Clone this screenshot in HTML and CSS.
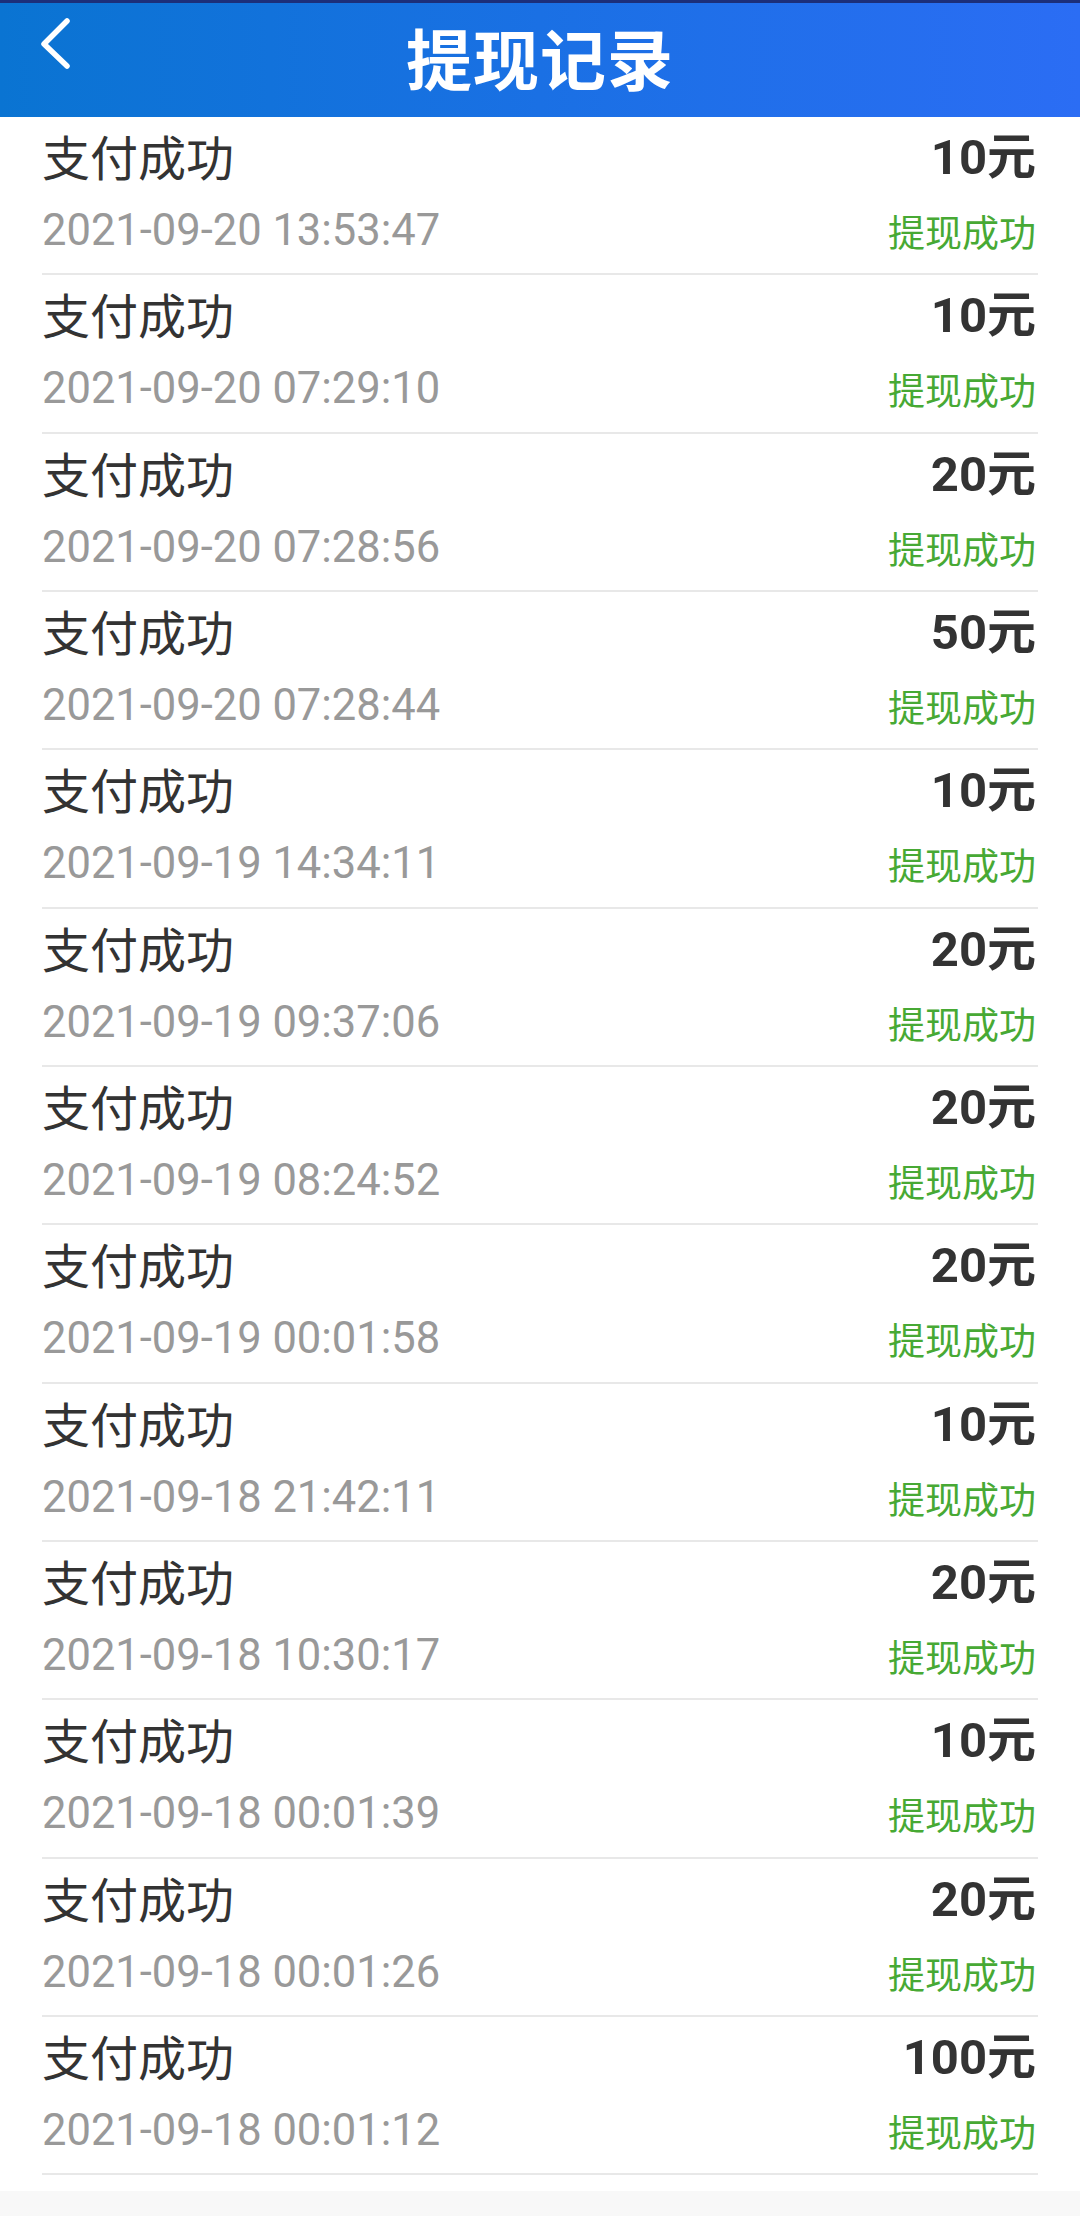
FILE: index.html
```html
<!DOCTYPE html>
<html lang="zh-CN">
<head>
<meta charset="utf-8">
<title>提现记录</title>
<link rel="stylesheet" href="styles.css">
</head>
<body>
<header class="topbar">
  <a class="back" href="#" aria-label="返回">
    <svg width="40" height="56" viewBox="0 0 40 56"><polyline points="27,6 4,29 27,51" fill="none" stroke="#fff" stroke-width="5.5" stroke-linecap="round" stroke-linejoin="round"/></svg>
  </a>
  <h1 class="title">提现记录</h1>
</header>
<main class="list">
  <div class="row"><span class="name">支付成功</span><span class="amount">10元</span><span class="date">2021-09-20 13:53:47</span><span class="status">提现成功</span></div>
  <div class="row"><span class="name">支付成功</span><span class="amount">10元</span><span class="date">2021-09-20 07:29:10</span><span class="status">提现成功</span></div>
  <div class="row"><span class="name">支付成功</span><span class="amount">20元</span><span class="date">2021-09-20 07:28:56</span><span class="status">提现成功</span></div>
  <div class="row"><span class="name">支付成功</span><span class="amount">50元</span><span class="date">2021-09-20 07:28:44</span><span class="status">提现成功</span></div>
  <div class="row"><span class="name">支付成功</span><span class="amount">10元</span><span class="date">2021-09-19 14:34:11</span><span class="status">提现成功</span></div>
  <div class="row"><span class="name">支付成功</span><span class="amount">20元</span><span class="date">2021-09-19 09:37:06</span><span class="status">提现成功</span></div>
  <div class="row"><span class="name">支付成功</span><span class="amount">20元</span><span class="date">2021-09-19 08:24:52</span><span class="status">提现成功</span></div>
  <div class="row"><span class="name">支付成功</span><span class="amount">20元</span><span class="date">2021-09-19 00:01:58</span><span class="status">提现成功</span></div>
  <div class="row"><span class="name">支付成功</span><span class="amount">10元</span><span class="date">2021-09-18 21:42:11</span><span class="status">提现成功</span></div>
  <div class="row"><span class="name">支付成功</span><span class="amount">20元</span><span class="date">2021-09-18 10:30:17</span><span class="status">提现成功</span></div>
  <div class="row"><span class="name">支付成功</span><span class="amount">10元</span><span class="date">2021-09-18 00:01:39</span><span class="status">提现成功</span></div>
  <div class="row"><span class="name">支付成功</span><span class="amount">20元</span><span class="date">2021-09-18 00:01:26</span><span class="status">提现成功</span></div>
  <div class="row"><span class="name">支付成功</span><span class="amount">100元</span><span class="date">2021-09-18 00:01:12</span><span class="status">提现成功</span></div>
</main>
<footer class="foot"></footer>
</body>
</html>
```
FILE: styles.css
```css
* { box-sizing: border-box; }
html, body { margin: 0; padding: 0; }
body {
  width: 1080px;
  height: 2216px;
  overflow: hidden;
  background: #fff;
  font-family: Roboto, "Noto Sans CJK SC", sans-serif;
  display: flex;
  flex-direction: column;
}
.topbar {
  height: 117px;
  flex: none;
  display: flex;
  align-items: center;
  justify-content: center;
  background: linear-gradient(90deg, #0a74d2 0%, #1a70e4 50%, #2b6df4 100%);
  border-top: 3px solid #1c2f7a;
  padding-bottom: 8px;
  position: relative;
}
.back {
  position: absolute;
  left: 40px;
  top: 12px;
  display: block;
  width: 40px;
  height: 56px;
}
.back svg { display: block; }
.title {
  margin: 0;
  color: #fff;
  font-family: "Noto Sans CJK SC", sans-serif;
  font-weight: 700;
  font-size: 66px;
  line-height: 1;
  letter-spacing: 1px;
}
.list {
  padding: 0 42px;
  flex: none;
}
.row {
  height: 158.33px;
  padding-top: 10px;
  border-bottom: 2px solid #e8e8e8;
  display: grid;
  grid-template-columns: 1fr auto;
  grid-template-rows: 56px 50px;
  row-gap: 23px;
  align-items: center;
}
.name {
  font-family: "Noto Sans CJK SC", sans-serif;
  font-size: 48px;
  color: #333;
  line-height: 56px;
}
.amount {
  justify-self: end;
  font-family: Roboto, "Noto Sans CJK SC", sans-serif;
  font-size: 49px;
  font-weight: 700;
  color: #333;
  line-height: 56px;
  margin-top: 6px;
  margin-right: 2px;
}
.date {
  font-size: 43.5px;
  color: #999;
  line-height: 50px;
}
.status {
  justify-self: end;
  font-family: "Noto Sans CJK SC", sans-serif;
  font-size: 37px;
  color: #47a934;
  line-height: 50px;
  margin-right: 2px;
}
.foot {
  flex: 1;
  margin-top: 16px;
  background: #f8f8f8;
}
```
